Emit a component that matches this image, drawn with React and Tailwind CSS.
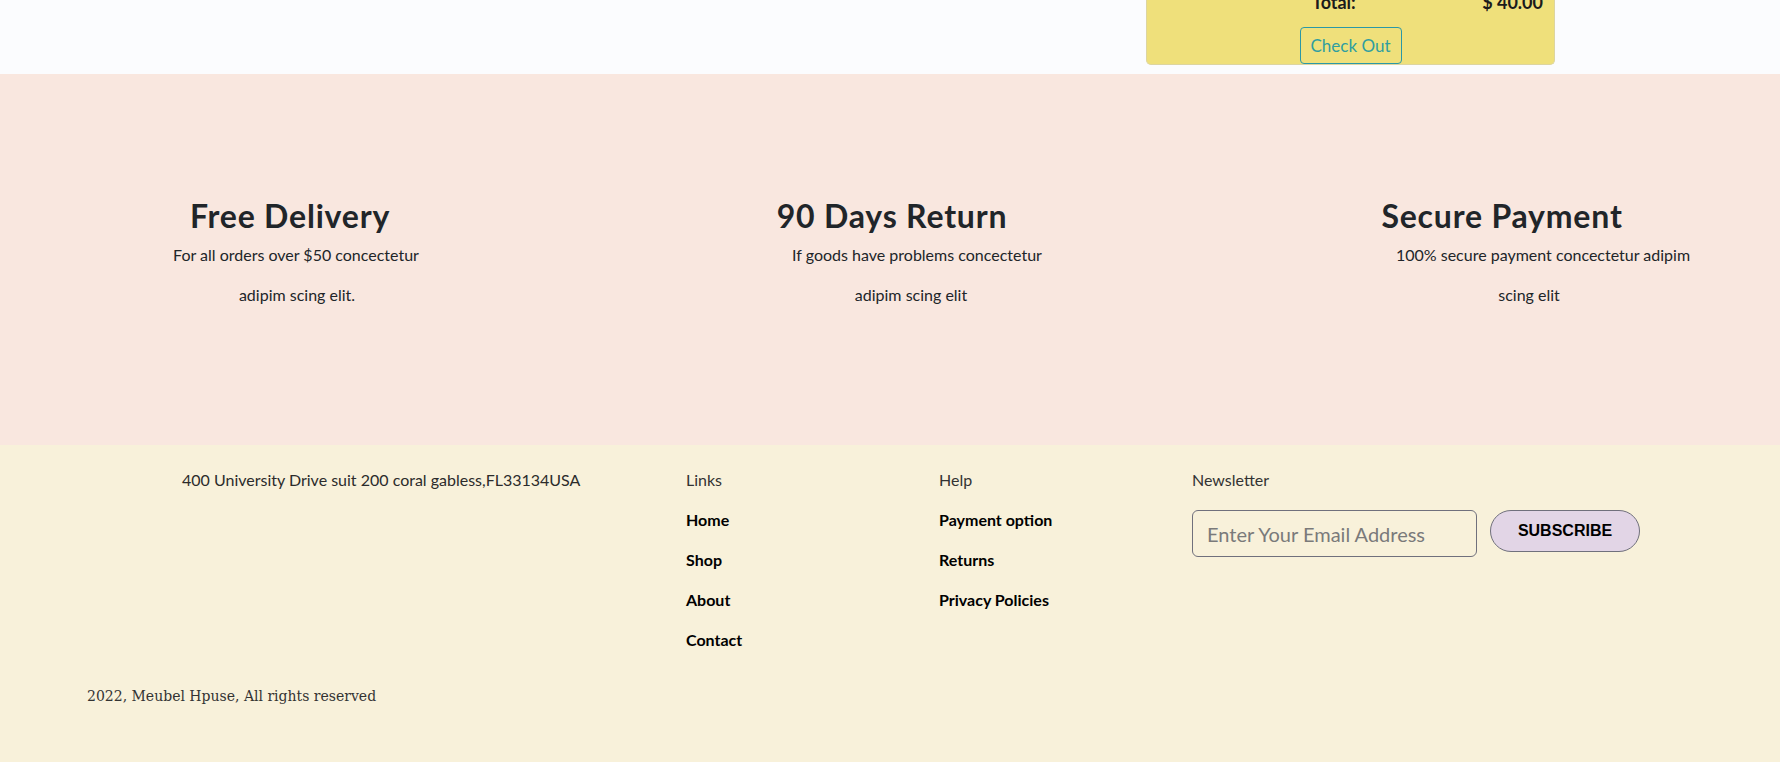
import React from "react";

function Feature({ title, lines, className }) {
  return (
    <div className={"flex w-[400px] flex-col items-center " + className}>
      <h3 className="text-[32px] font-bold leading-[38px] tracking-[0.8px] text-[#212529]">{title}</h3>
      <p className="w-full text-[16px] leading-[40px] text-[#212529]">
        {lines.map(([text, pad], i) => (
          <span key={i} className={"block text-center " + pad}>
            {text}
          </span>
        ))}
      </p>
    </div>
  );
}

export default function App() {
  return (
    <div className="w-full font-['Lato','Open_Sans',sans-serif] text-[#212529]">
      {/* Top strip with the bottom of the cart summary card */}
      <div className="flex h-[74px] justify-end overflow-hidden bg-[#fbfcfe] pr-[225px]">
        <div className="mt-[-10px] flex h-[75px] w-[409px] flex-col items-center rounded-b-[5px] border border-t-0 border-[#ddd5a0] bg-[#efe07b]">
          <div className="flex h-[24px] w-full justify-between pl-[165px] pr-[11px] text-[18px] font-bold leading-[24px] text-[#1b1b1b]">
            <span>Total:</span>
            <span>$ 40.00</span>
          </div>
          <button className="mt-[13px] flex h-[37px] w-[102px] items-center justify-center rounded-[4px] border border-[#2a98a6] text-[17px] text-[#2f9ea0]">
            Check Out
          </button>
        </div>
      </div>

      {/* Features */}
      <section className="flex h-[371px] bg-[#f9e7df] pl-[90px] pt-[123px]">
        <Feature
          title="Free Delivery"
          lines={[
            ["For all orders over $50 concectetur", "pl-[12px]"],
            ["adipim scing elit.", "pl-[14px]"],
          ]}
        />
        <Feature
          className="ml-[202px]"
          title="90 Days Return"
          lines={[
            ["If goods have problems concectetur", "pl-[50px]"],
            ["adipim scing elit", "pl-[38px]"],
          ]}
        />
        <Feature
          className="ml-[210px]"
          title="Secure Payment"
          lines={[
            ["100% secure payment concectetur adipim", "pl-[82px]"],
            ["scing elit", "pl-[54px]"],
          ]}
        />
      </section>

      {/* Footer */}
      <footer className="h-[317px] bg-[#f8f1da] pt-[23px]">
        <div className="grid grid-cols-[504px_253px_253px_1fr] pl-[182px] text-[16px] leading-[24px]">
          <div className="text-[#2b2b2b]">400 University Drive suit 200 coral gabless,FL33134USA</div>
          <div className="flex flex-col gap-[16px]">
            <span className="text-[#333]">Links</span>
            <a className="font-bold text-black">Home</a>
            <a className="font-bold text-black">Shop</a>
            <a className="font-bold text-black">About</a>
            <a className="font-bold text-black">Contact</a>
          </div>
          <div className="flex flex-col gap-[16px]">
            <span className="text-[#333]">Help</span>
            <a className="font-bold text-black">Payment option</a>
            <a className="font-bold text-black">Returns</a>
            <a className="font-bold text-black">Privacy Policies</a>
          </div>
          <div className="flex flex-col">
            <span className="text-[#333]">Newsletter</span>
            <div className="mt-[18px] flex items-start gap-[13px]">
              <input
                type="email"
                placeholder="Enter Your Email Address"
                className="h-[47px] w-[285px] rounded-[6px] border border-[#70707c] bg-transparent px-[14px] text-[20px] outline-none placeholder:text-[#7a7a7a]"
              />
              <button className="h-[42px] w-[150px] rounded-full border border-[#70707c] bg-[#e2d5e6] font-['Liberation_Sans',Arial,sans-serif] text-[16px] font-bold uppercase text-black">
                Subscribe
              </button>
            </div>
          </div>
        </div>
        <div className="mt-[34px] pl-[87px] font-['DejaVu_Serif',serif] text-[14px] leading-[20px] text-[#333]">
          2022, Meubel Hpuse, All rights reserved
        </div>
      </footer>
    </div>
  );
}
